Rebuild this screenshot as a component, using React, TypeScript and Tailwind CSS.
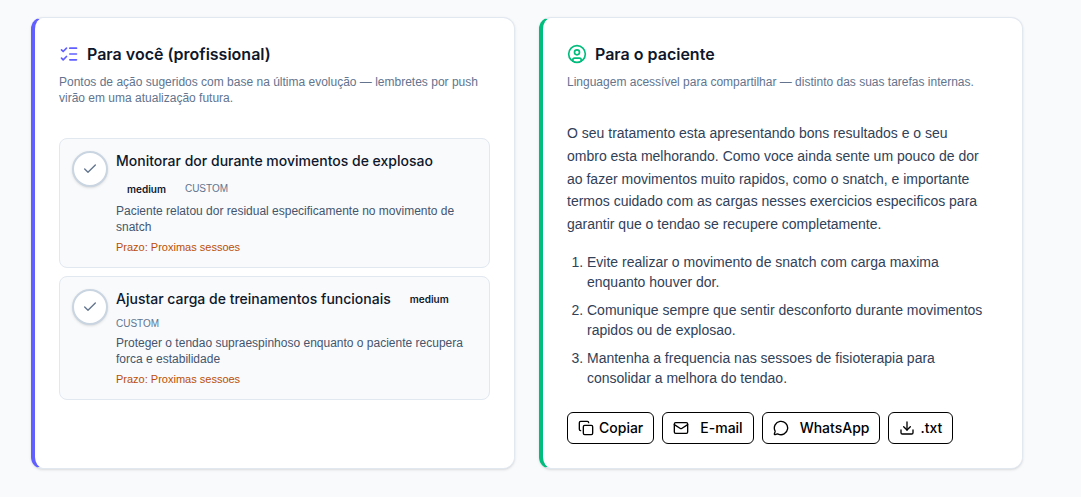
import { Check, CircleUser, Copy, Download, ListChecks, Mail, MessageCircle } from "lucide-react";
import type { ReactNode } from "react";

type ActionItem = {
  title: string;
  priority: string;
  category: string;
  description: string;
  due: string;
};

const actionItems: ActionItem[] = [
  {
    title: "Monitorar dor durante movimentos de explosao",
    priority: "medium",
    category: "CUSTOM",
    description: "Paciente relatou dor residual especificamente no movimento de snatch",
    due: "Proximas sessoes",
  },
  {
    title: "Ajustar carga de treinamentos funcionais",
    priority: "medium",
    category: "CUSTOM",
    description: "Proteger o tendao supraespinhoso enquanto o paciente recupera forca e estabilidade",
    due: "Proximas sessoes",
  },
];

const patientTips: string[] = [
  "Evite realizar o movimento de snatch com carga maxima enquanto houver dor.",
  "Comunique sempre que sentir desconforto durante movimentos rapidos ou de explosao.",
  "Mantenha a frequencia nas sessoes de fisioterapia para consolidar a melhora do tendao.",
];

const outlineButton =
  "inline-flex h-8 items-center gap-[5px] rounded-md border border-black bg-white px-2.5 font-['Inter',sans-serif] text-sm font-medium text-black hover:bg-slate-50";

type PanelProps = {
  accent: string;
  icon: ReactNode;
  title: string;
  description: string;
  children: ReactNode;
};

const Panel = ({ accent, icon, title, description, children }: PanelProps) => (
  <section className={`rounded-xl border border-l-4 border-slate-200 bg-white p-6 shadow-sm ${accent}`}>
    <header className="mb-8">
      <h2 className="flex items-center gap-2 font-['Inter',sans-serif] text-base font-semibold text-slate-900">
        {icon}
        {title}
      </h2>
      <p className="mt-2 text-xs text-slate-500">{description}</p>
    </header>
    {children}
  </section>
);

const ActionCard = ({ item }: { item: ActionItem }) => (
  <li className="flex items-start gap-2 rounded-lg border border-slate-200 bg-slate-50 p-3">
    <button
      type="button"
      aria-label="Concluir"
      className="flex size-9 shrink-0 items-center justify-center rounded-full border-2 border-slate-300 bg-white text-slate-500 shadow-sm"
    >
      <Check size={16} />
    </button>
    <div className="min-w-0 flex-1">
      <div className="flex flex-wrap items-center gap-2">
        <h3 className="font-['Inter',sans-serif] text-sm font-medium text-slate-900">{item.title}</h3>
        <span className="rounded-full border border-transparent px-2.5 font-['Inter',sans-serif] text-[10px] leading-[18px] font-semibold text-slate-900">
          {item.priority}
        </span>
        <span className="text-[10px] leading-[14px] text-slate-500">{item.category}</span>
      </div>
      <p className="mt-1 text-xs text-slate-600">{item.description}</p>
      <p className="mt-1 text-[11px] leading-4 text-amber-700">Prazo: {item.due}</p>
    </div>
  </li>
);

const App = () => {
  return (
    <main className="min-h-screen bg-slate-50 pt-[17px] pr-[58px] pb-7 pl-[31px] font-['Liberation_Sans',sans-serif]">
      <div className="grid grid-cols-2 gap-6">
        <Panel
          accent="border-l-indigo-500"
          icon={<ListChecks size={20} className="text-indigo-500" />}
          title="Para você (profissional)"
          description="Pontos de ação sugeridos com base na última evolução — lembretes por push virão em uma atualização futura."
        >
          <ul className="flex flex-col gap-2">
            {actionItems.map((item) => (
              <ActionCard key={item.title} item={item} />
            ))}
          </ul>
        </Panel>

        <Panel
          accent="border-l-emerald-500"
          icon={<CircleUser size={20} className="text-emerald-500" />}
          title="Para o paciente"
          description="Linguagem acessível para compartilhar — distinto das suas tarefas internas."
        >
          <p className="pr-3 text-sm leading-relaxed text-slate-700">
            O seu tratamento esta apresentando bons resultados e o seu ombro esta melhorando. Como voce
            ainda sente um pouco de dor ao fazer movimentos muito rapidos, como o snatch, e importante
            termos cuidado com as cargas nesses exercicios especificos para garantir que o tendao se
            recupere completamente.
          </p>
          <ol className="mt-4 flex list-decimal flex-col gap-2 pl-5 text-sm text-slate-700">
            {patientTips.map((tip) => (
              <li key={tip}>{tip}</li>
            ))}
          </ol>
          <div className="mt-6 flex flex-wrap gap-2">
            <button type="button" className={outlineButton}>
              <Copy size={16} />
              Copiar
            </button>
            <button type="button" className={outlineButton}>
              <Mail size={16} className="mr-1.5" />
              E-mail
            </button>
            <button type="button" className={outlineButton}>
              <MessageCircle size={16} className="mr-1.5" />
              WhatsApp
            </button>
            <button type="button" className={outlineButton}>
              <Download size={16} />
              .txt
            </button>
          </div>
        </Panel>
      </div>
    </main>
  );
};

export default App;
